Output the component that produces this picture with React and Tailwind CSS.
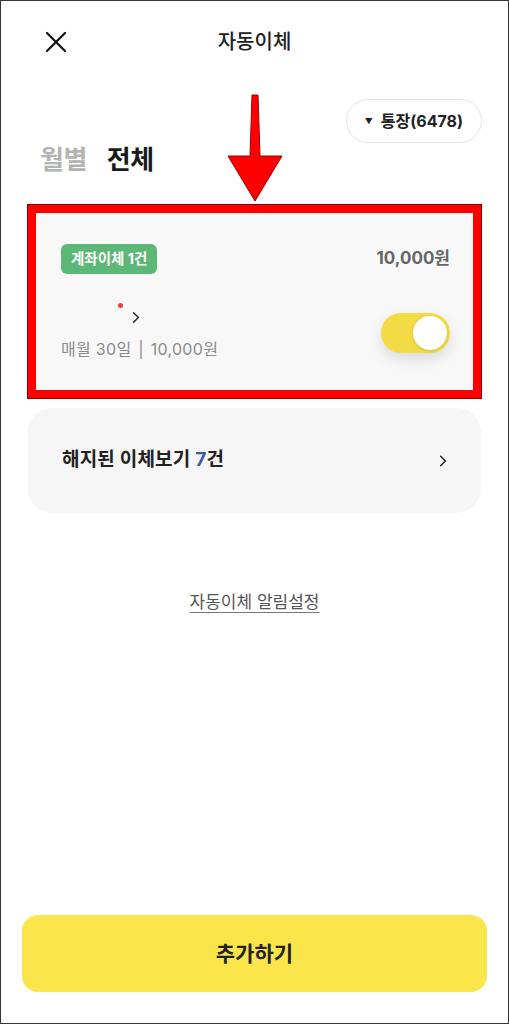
import React, { useState } from 'react';

const font = { fontFamily: 'Inter, "Noto Sans CJK KR", "Noto Sans", sans-serif' };

function Chevron({ className }) {
  return (
    <svg viewBox="0 0 10 16" className={className} fill="none" stroke="currentColor" strokeWidth="1.8" strokeLinecap="round" strokeLinejoin="round">
      <path d="M2 2l6 6-6 6" />
    </svg>
  );
}

function Toggle({ on, onClick }) {
  return (
    <button
      type="button"
      onClick={onClick}
      className={`relative w-[69px] h-[40px] rounded-full shadow-[0_6px_14px_rgba(0,0,0,0.12)] ${on ? 'bg-[#f3db45]' : 'bg-[#dddddd]'}`}
    >
      <span
        className={`absolute top-[3px] w-[34px] h-[34px] rounded-full bg-white shadow-[0_1px_3px_rgba(0,0,0,0.15)] ${on ? 'right-[3px]' : 'left-[3px]'}`}
      />
    </button>
  );
}

export default function App() {
  const [tab, setTab] = useState('전체');
  const [on, setOn] = useState(true);

  return (
    <div style={font} className="relative w-[509px] h-[1024px] bg-white border border-[#333333] flex flex-col overflow-hidden">
      {/* 헤더 */}
      <div className="relative h-[81px] flex items-center justify-center">
        <button type="button" className="absolute left-[43px] top-[29px] w-[24px] h-[24px] text-[#111]">
          <svg viewBox="0 0 24 24" fill="none" stroke="currentColor" strokeWidth="2.2" strokeLinecap="round">
            <path d="M3 3l18 18M21 3L3 21" />
          </svg>
        </button>
        <h1 className="text-[20px] font-medium text-[#222]">자동이체</h1>
      </div>

      {/* 계좌 선택 */}
      <div className="flex justify-end pr-[26px] pt-[17px]">
        <button type="button" className="h-[44px] pl-[18px] pr-[18px] rounded-full border border-[#e6e6e6] flex items-center gap-[8px] text-[#222]">
          <span className="text-[8px] leading-none">▼</span>
          <span className="text-[16px] font-bold">통장(6478)</span>
        </button>
      </div>

      {/* 탭 */}
      <div className="flex gap-[20px] pl-[39px] -mt-[1px] h-[36px] items-center">
        {['월별', '전체'].map((t) => (
          <button
            key={t}
            type="button"
            onClick={() => setTab(t)}
            className={`text-[26px] font-bold leading-none tracking-[-0.5px] ${tab === t ? 'text-[#1a1a1a]' : 'text-[#b3b3b3]'}`}
          >
            {t}
          </button>
        ))}
      </div>

      {/* 자동이체 카드 (빨간 표시) */}
      <div className="mx-[27px] mt-[27px] border-[8px] border-[#ff0000] shadow-[0_0_0_1px_#8a0000] bg-[#f8f8f8] h-[193px] pl-[25px] pr-[23px] pt-[31px]">
        <div className="flex items-center justify-between">
          <span className="h-[30px] px-[10px] rounded-[6px] bg-[#5cb876] text-white text-[14.5px] font-bold flex items-center">
            계좌이체 1건
          </span>
          <span className="text-[17px] font-bold text-[#666]">10,000원</span>
        </div>
        <div className="flex items-center justify-between mt-[30px]">
          <div>
            <div className="relative h-[26px] flex items-center pl-[71px]">
              <span className="absolute left-[57px] top-[-1px] w-[5px] h-[5px] rounded-full bg-[#e0463c]" />
              <Chevron className="w-[8px] h-[13px] text-[#222]" />
            </div>
            <p className="text-[16px] text-[#8a8a8a] mt-[7px] tracking-[0.3px]">매월 30일 <span className="px-[2px]">|</span> 10,000원</p>
          </div>
          <Toggle on={on} onClick={() => setOn(!on)} />
        </div>
      </div>

      {/* 해지된 이체 */}
      <button type="button" className="mx-[27px] mt-[10px] h-[105px] rounded-[24px] bg-[#f6f6f6] flex items-center justify-between pl-[34px] pr-[34px]">
        <span className="text-[19px] font-bold text-[#222] tracking-[0.2px]">
          해지된 이체보기 <span className="text-[#3b5ba9]">7</span>건
        </span>
        <Chevron className="w-[8px] h-[14px] text-[#222]" />
      </button>

      <div className="flex justify-center mt-[77px]">
        <button type="button" className="text-[17px] text-[#555] underline underline-offset-[4px] decoration-[#777]">
          자동이체 알림설정
        </button>
      </div>

      {/* 추가하기 */}
      <button type="button" className="mt-auto mb-[31px] mx-[21px] h-[77px] rounded-[16px] bg-[#fae54b] text-[21px] font-bold text-[#222]">
        추가하기
      </button>

      {/* 빨간 화살표 주석 */}
      <svg className="absolute left-[224px] top-[92px] w-[60px] h-[110px]" viewBox="0 0 60 110">
        <path d="M27 2h6l2 61h22L30 108 3 63h22z" fill="#ff0000" stroke="#a00000" strokeWidth="1" strokeLinejoin="round" />
      </svg>
    </div>
  );
}
